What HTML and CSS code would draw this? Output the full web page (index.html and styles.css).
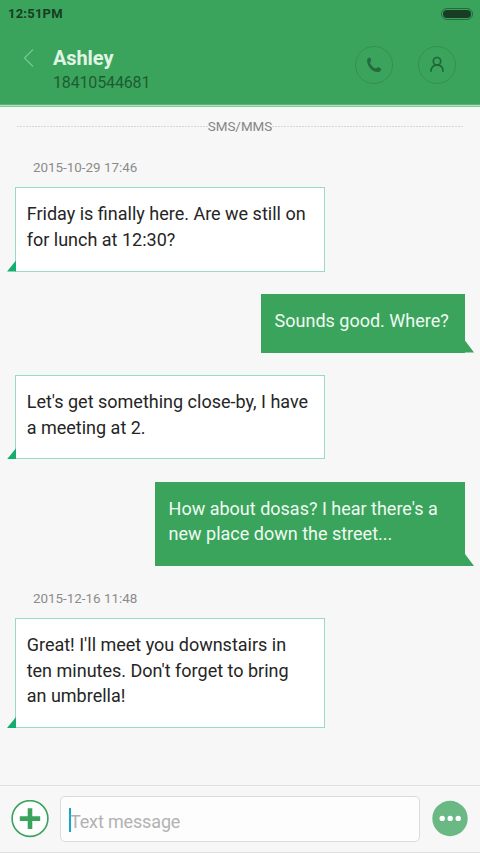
FILE: index.html
```html
<!DOCTYPE html>
<html lang="en">
<head>
<meta charset="utf-8">
<title>Ashley</title>
<link rel="stylesheet" href="styles.css">
</head>
<body>
<div class="screen">
  <header class="header">
    <div class="status"><span class="time">12:51PM</span><span class="battery"><i></i></span></div>
    <div class="contact">
      <svg class="back" width="12" height="20" viewBox="0 0 12 20"><path d="M10 1.5 1.5 10 10 18.5"/></svg>
      <div class="who"><h1>Ashley</h1><p>18410544681</p></div>
      <div class="round"><svg width="16" height="16" viewBox="0 0 16 16"><path class="phone" d="M1.2 2.2C2 1 3 .5 4 .8c.8.6 1.3 2.2 1.1 3.1C5 4.800 4.100 4.700 4 5.600c.4 2.100 3.100 5.100 5.500 5.900 1-.1 1.200-1.200 2.200-1.300 1.200 0 2.800.7 3.500 1.600.4 1.200-.7 2.600-2.200 3.100C7.200 16.300.2 9.100 1.200 2.200Z"/></svg></div>
      <div class="round"><svg width="16" height="16" viewBox="0 0 16 16"><g class="person"><circle cx="8" cy="4.200" r="3.700"/><path d="M1.900 14.800C1.900 10.500 4.300 7.800 8 7.800s6.100 2.700 6.100 7"/></g></svg></div>
    </div>
  </header>
  <main class="thread">
    <div class="channel"><svg height="1"><line x1="0" y1=".5" x2="100%" y2=".5"/></svg><span>SMS/MMS</span><svg height="1"><line x1="0" y1=".5" x2="100%" y2=".5"/></svg></div>
    <time class="date first">2015-10-29 17:46</time>
    <div class="bubble in">Friday is finally here. Are we still on<br>for lunch at 12:30?</div>
    <div class="bubble out short">Sounds good. Where?</div>
    <div class="bubble in">Let's get something close-by, I have<br>a meeting at 2.</div>
    <div class="bubble out">How about dosas? I hear there's a<br>new place down the street...</div>
    <time class="date">2015-12-16 11:48</time>
    <div class="bubble in">Great! I'll meet you downstairs in<br>ten minutes. Don't forget to bring<br>an umbrella!</div>
  </main>
  <footer class="composer">
    <svg width="38" height="38" viewBox="0 0 38 38"><circle class="ring" cx="19" cy="18.500" r="17.900"/><path class="plus" d="M19 8.300v20.600M8.800 18.600h20.400"/></svg>
    <div class="field"><i class="caret"></i><span>Text message</span></div>
    <svg class="more" width="36" height="37" viewBox="0 0 36 37"><circle class="disc" cx="18" cy="18.500" r="17.700"/><g fill="#fff"><circle cx="10.200" cy="18.400" r="2.700"/><circle cx="18.200" cy="18.400" r="2.700"/><circle cx="26.200" cy="18.400" r="2.700"/></g></svg>
  </footer>
</div>
</body>
</html>
```
FILE: styles.css
```css
* { box-sizing: border-box; }
body { margin: 0; font-family: Roboto, "Liberation Sans", sans-serif; }
h1, p { margin: 0; }
svg { display: block; flex: none; }

.screen { width: 480px; height: 853px; display: flex; flex-direction: column; background: #f7f7f7; overflow: hidden; }

.header { height: 107px; flex: none; background: #3ba45c; border-bottom: 1px solid #83cb9a; box-shadow: inset 0 -1px #b5dfc2, inset 0 -2px #5bb277; }
.status { height: 27px; display: flex; align-items: center; justify-content: space-between; padding: 0 7px 0 8px; }
.time { font-size: 13px; font-weight: 700; color: #173d24; letter-spacing: .22px; }
.battery { width: 32px; height: 12px; padding: 1px; border: 1px solid #23693a; border-radius: 6px; }
.battery i { display: block; height: 8px; border-radius: 4px; background: #173d24; }
.contact { display: flex; padding-left: 23px; }
.back { margin-top: 21px; fill: none; stroke: #78c38e; stroke-width: 1.3; }
.who { width: 302px; margin: 18px 0 0 18px; }
.who h1 { font-size: 20px; line-height: 26px; font-weight: 700; letter-spacing: -.1px; color: #e0f4e6; }
.who p { font-size: 16px; line-height: 24px; letter-spacing: -.15px; color: #1d5c33; }
.round { width: 38px; height: 38px; margin: 19px 25px 0 0; flex: none; display: flex; align-items: center; justify-content: center; border: 1px solid #33914f; border-radius: 50%; }
.round:last-child { margin-right: 0; }
.round svg { overflow: visible; }
.phone { fill: #266b40; }
.person { fill: none; stroke: #1f6638; stroke-width: 1.7; }

.thread { flex: 1; display: flex; flex-direction: column; align-items: flex-start; padding: 0 15px; }
.channel { align-self: stretch; height: 38px; display: flex; align-items: center; padding: 0 2px; font-size: 13.400px; color: #858585; }
.channel svg { flex: 1; width: 0; }
.channel line { stroke: #d6d6d6; stroke-dasharray: 2 1; }
.date { font-size: 13.400px; line-height: 20px; color: #8b8b8b; padding-left: 18px; margin: .9px 0 8.700px; }
.date.first { margin: 13px 0 9px; }
.bubble { position: relative; flex: none; font-size: 18px; line-height: 25.750px; white-space: nowrap; margin-bottom: 22.250px; }
.in { width: 310px; padding: 13px 10px 18px 10.700px; color: #252525; background: #fff; border: 1px solid #9adabd; }
.in::before { content: ""; position: absolute; left: -9px; bottom: -1px; width: 9px; height: 11px; background: #16ad70; clip-path: polygon(100% 0, 100% 100%, 0 100%); }
.out { width: 310px; align-self: flex-end; padding: 14px 13px 19px 13.600px; color: #effaf2; background: #3ba45c; }
.out::after { content: ""; position: absolute; right: -9px; bottom: 0; width: 9px; height: 12px; background: #3ba45c; clip-path: polygon(0 0, 100% 100%, 0 100%); }
.short { width: 204px; }

.composer { height: 68px; flex: none; display: flex; align-items: flex-start; padding: 14px 12px 0 11px; border-top: 1px solid #e0e0e0; border-bottom: 1px solid #e0e0e0; }
.ring { fill: #fff; stroke: #3ba45c; stroke-width: 1.6; }
.plus { stroke: #3ba45c; stroke-width: 4.600; }
.field { width: 361px; height: 46px; margin: -4px 12px 0 11px; display: flex; align-items: center; padding: 5px 8px 0; background: #fdfdfd; border: 1px solid #dcdcdc; border-radius: 5px; font-size: 18px; letter-spacing: -.15px; color: #b2b2b2; }
.caret { width: 2px; height: 24px; margin: -3px -1px 0 0; background: #12a9cc; }
.disc { fill: #6ab884; }
```
